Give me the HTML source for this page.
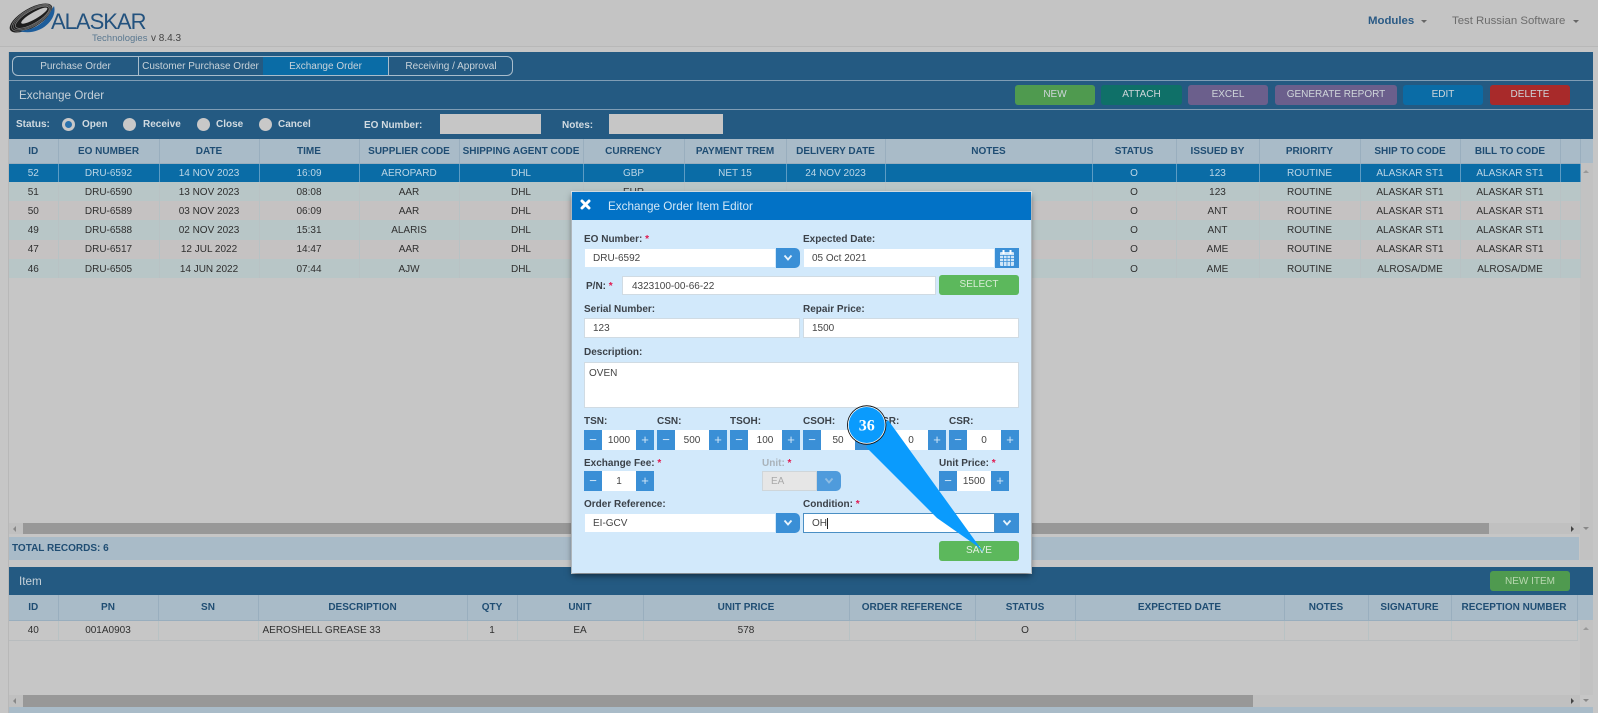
<!DOCTYPE html>
<html><head><meta charset="utf-8"><title>Exchange Order</title>
<style>
html,body{margin:0;padding:0;width:1598px;height:713px;overflow:hidden;background:#c6c6c6}
#r{position:absolute;left:0;top:0;width:1598px;height:713px;overflow:hidden;font-family:"Liberation Sans",sans-serif;font-size:10px;color:#333;filter:blur(.35px)}
.a{position:absolute;white-space:nowrap}
.bl{background:#245a82}
.btn{position:absolute;top:85px;height:20px;line-height:20px;text-align:center;border-radius:3px;color:#cfd6da;font-size:10px}
table{position:absolute;border-collapse:collapse;table-layout:fixed;font-size:10px}
td,th{padding:1px 0 0;text-align:center;overflow:hidden;white-space:nowrap}
th{background:#a9bbc8;color:#1f4d73;font-weight:bold;border-right:1px solid #99aebe;border-bottom:1px solid #99aebe}
td{color:#2f2f2f;border-right:1px solid #b8c2c4}
tr.n td{padding-top:0}
tr.s td{background:#0a6ca6;color:#bcd6e6;border-right:1px solid #5d9cc4}
tr.t td{background:#b8c6c7}
tr.g td{background:#c5c2c2}
.l{position:absolute;white-space:nowrap;font-weight:bold;color:#3b4148;font-size:10px;line-height:14px}
.l i{color:#e0194f;font-style:normal;font-weight:bold}
.in{position:absolute;background:#fff;border:1px solid #d0dbe3;box-sizing:border-box;height:20px;line-height:20px;padding-left:8px;color:#444;font-size:10px}
.sb{position:absolute;background:#3a8fd6;height:20px;width:24px;border-radius:0 5px 5px 0}
.sb svg{position:absolute;left:7px;top:6px}
.sp{position:absolute;height:20px;width:70px;background:#fff}
.sp b{position:absolute;top:0;width:18px;height:20px;background:#3a8fd6;color:#d3e7f7;font-weight:normal;font-size:13px;line-height:20px;text-align:center}
.sp b.m{left:0}.sp b.p{right:0}
.sp span{position:absolute;left:18px;right:18px;top:0;line-height:22px;text-align:center;color:#444}
.radio{position:absolute;width:13px;height:13px;border-radius:50%;background:#c8c8c8}
.rl{position:absolute;color:#d2dbe1;font-weight:bold;font-size:10px;line-height:14px}
</style></head><body><div id="r">

<!-- Top bar -->
<div class="a" style="left:0;top:0;width:1598px;height:46px;background:#c4c4c4;border-bottom:1px solid #b8b8b8"></div>
<svg class="a" style="left:8px;top:3px" width="50" height="32" viewBox="0 0 50 32">
<g transform="rotate(-30 23 15)">
<ellipse cx="23" cy="15" rx="24" ry="9.5" fill="#1e1e1e"/>
<g fill="none">
<ellipse cx="23.5" cy="15" rx="22.4" ry="8.4" stroke="#777" stroke-width=".7"/>
<ellipse cx="24" cy="15" rx="20.8" ry="7.4" stroke="#6c6c6c" stroke-width=".7"/>
<ellipse cx="24.5" cy="15" rx="19.2" ry="6.4" stroke="#888" stroke-width=".7"/>
</g>
<ellipse cx="27" cy="14.6" rx="15" ry="3.4" fill="#c4c4c4"/>
</g>
<path d="M11 28 C26 27 37 20 43 8 L46 3 C50 17 31 34 11 28Z" fill="#1d5d9b"/>
</svg>
<div class="a" style="left:51px;top:9px;font-size:22px;line-height:26px;letter-spacing:-1px;color:#23527e">ALASKAR</div>
<div class="a" style="left:92px;top:33px;font-size:9.5px;line-height:12px;color:#5a7890">Technologies</div>
<div class="a" style="left:151px;top:33px;font-size:10px;line-height:12px;color:#444">v 8.4.3</div>
<div class="a" style="left:1368px;top:14px;font-size:11.4px;line-height:14px;font-weight:bold;color:#2a5a85">Modules</div>
<div class="a" style="left:1421px;top:20px;border:3px solid transparent;border-top:3px solid #666;border-bottom:0"></div>
<div class="a" style="left:1452px;top:14px;font-size:11.4px;line-height:14px;color:#6c6c6c">Test Russian Software</div>
<div class="a" style="left:1573px;top:20px;border:3px solid transparent;border-top:3px solid #666;border-bottom:0"></div>

<!-- Left page border -->
<div class="a" style="left:8px;top:52px;width:1px;height:661px;background:#b8b8b8"></div>

<!-- Main panel -->
<div class="a bl" style="left:9px;top:52px;width:1584px;height:87px"></div>
<div class="a" style="left:9px;top:80px;width:1584px;height:1px;background:#7f9db5"></div>
<div class="a" style="left:9px;top:109px;width:1584px;height:1px;background:#7f9db5"></div>

<!-- Tabs -->
<div class="a" style="left:12px;top:56px;width:501px;height:20px;box-sizing:border-box;border:1px solid #a9bdcc;border-radius:6px;overflow:hidden">
 <div class="a" style="left:0;top:0;width:125px;height:18px;line-height:19px;text-align:center;color:#c9d3da;border-right:1px solid #a9bdcc">Purchase Order</div>
 <div class="a" style="left:125px;top:0;width:125px;height:18px;line-height:19px;text-align:center;color:#c9d3da;border-right:1px solid #a9bdcc">Customer Purchase Order</div>
 <div class="a" style="left:250px;top:0;width:125px;height:18px;line-height:19px;text-align:center;color:#c9d3da;background:#0a6ca6;border-right:1px solid #a9bdcc">Exchange Order</div>
 <div class="a" style="left:376px;top:0;width:124px;height:18px;line-height:19px;text-align:center;color:#c9d3da">Receiving / Approval</div>
</div>

<div class="a" style="left:19px;top:89px;font-size:11.7px;line-height:14px;color:#c6d1d9">Exchange Order</div>

<div class="btn" style="left:1015px;width:80px;background:#4f9a4f">NEW</div>
<div class="btn" style="left:1101px;width:81px;background:#0f7068">ATTACH</div>
<div class="btn" style="left:1188px;width:80px;background:#6b5f8c">EXCEL</div>
<div class="btn" style="left:1275px;width:122px;background:#6b5f8c">GENERATE REPORT</div>
<div class="btn" style="left:1403px;width:80px;background:#0a6ca6">EDIT</div>
<div class="btn" style="left:1490px;width:80px;background:#a82a2a">DELETE</div>

<!-- Status row -->
<div class="rl" style="left:16px;top:118px">Status:</div>
<div class="radio" style="left:62px;top:118px"></div>
<div class="a" style="left:65px;top:121px;width:7px;height:7px;border-radius:50%;background:#2a72ad"></div>
<div class="rl" style="left:82px;top:118px">Open</div>
<div class="radio" style="left:123px;top:118px"></div>
<div class="rl" style="left:143px;top:118px">Receive</div>
<div class="radio" style="left:197px;top:118px"></div>
<div class="rl" style="left:216px;top:118px">Close</div>
<div class="radio" style="left:259px;top:118px"></div>
<div class="rl" style="left:278px;top:118px">Cancel</div>
<div class="rl" style="left:364px;top:119px">EO Number:</div>
<div class="a" style="left:440px;top:114px;width:101px;height:20px;background:#c6c6c6"></div>
<div class="rl" style="left:562px;top:119px">Notes:</div>
<div class="a" style="left:609px;top:114px;width:114px;height:20px;background:#c6c6c6"></div>

<!-- Main grid body bg -->
<div class="a" style="left:9px;top:278px;width:1571px;height:245px;background:#c6c6c6"></div>
<div class="a" style="left:1580px;top:139px;width:13px;height:24px;background:#a9bbc8"></div>
<div class="a" style="left:1580px;top:163px;width:13px;height:397px;background:#c2c2c2"></div>
<div class="a" style="left:1583px;top:170px;border:3px solid transparent;border-bottom:3px solid #999;border-top:0"></div>

<table style="left:9px;top:139px;width:1571px">
<colgroup><col style="width:49px"><col style="width:101px"><col style="width:100px"><col style="width:100px"><col style="width:100px"><col style="width:124px"><col style="width:101px"><col style="width:102px"><col style="width:99px"><col style="width:207px"><col style="width:84px"><col style="width:83px"><col style="width:101px"><col style="width:100px"><col style="width:100px"><col style="width:20px"></colgroup>
<tr style="height:24px"><th>ID</th><th>EO NUMBER</th><th>DATE</th><th>TIME</th><th>SUPPLIER CODE</th><th>SHIPPING AGENT CODE</th><th>CURRENCY</th><th>PAYMENT TREM</th><th>DELIVERY DATE</th><th>NOTES</th><th>STATUS</th><th>ISSUED BY</th><th>PRIORITY</th><th>SHIP TO CODE</th><th>BILL TO CODE</th><th></th></tr>
<tr class="s" style="height:19px"><td>52</td><td>DRU-6592</td><td>14 NOV 2023</td><td>16:09</td><td>AEROPARD</td><td>DHL</td><td>GBP</td><td>NET 15</td><td>24 NOV 2023</td><td></td><td>O</td><td>123</td><td>ROUTINE</td><td>ALASKAR ST1</td><td>ALASKAR ST1</td><td></td></tr>
<tr class="t" style="height:19px"><td>51</td><td>DRU-6590</td><td>13 NOV 2023</td><td>08:08</td><td>AAR</td><td>DHL</td><td>EUR</td><td></td><td></td><td></td><td>O</td><td>123</td><td>ROUTINE</td><td>ALASKAR ST1</td><td>ALASKAR ST1</td><td></td></tr>
<tr class="g" style="height:19px"><td>50</td><td>DRU-6589</td><td>03 NOV 2023</td><td>06:09</td><td>AAR</td><td>DHL</td><td></td><td></td><td></td><td></td><td>O</td><td>ANT</td><td>ROUTINE</td><td>ALASKAR ST1</td><td>ALASKAR ST1</td><td></td></tr>
<tr class="t n" style="height:20px"><td>49</td><td>DRU-6588</td><td>02 NOV 2023</td><td>15:31</td><td>ALARIS</td><td>DHL</td><td></td><td></td><td></td><td></td><td>O</td><td>ANT</td><td>ROUTINE</td><td>ALASKAR ST1</td><td>ALASKAR ST1</td><td></td></tr>
<tr class="g n" style="height:19px"><td>47</td><td>DRU-6517</td><td>12 JUL 2022</td><td>14:47</td><td>AAR</td><td>DHL</td><td></td><td></td><td></td><td></td><td>O</td><td>AME</td><td>ROUTINE</td><td>ALASKAR ST1</td><td>ALASKAR ST1</td><td></td></tr>
<tr class="t" style="height:19px"><td>46</td><td>DRU-6505</td><td>14 JUN 2022</td><td>07:44</td><td>AJW</td><td>DHL</td><td></td><td></td><td></td><td></td><td>O</td><td>AME</td><td>ROUTINE</td><td>ALROSA/DME</td><td>ALROSA/DME</td><td></td></tr>
</table>

<!-- Scrollbar 1 -->
<div class="a" style="left:9px;top:523px;width:1571px;height:11px;background:#c0c0c0"></div>
<div class="a" style="left:23px;top:523px;width:1466px;height:11px;background:#989898"></div>
<div class="a" style="left:13px;top:526px;border:3px solid transparent;border-right:3px solid #888;border-left:0"></div>
<div class="a" style="left:1571px;top:526px;border:3px solid transparent;border-left:3px solid #444;border-right:0"></div>
<div class="a" style="left:1583px;top:527px;border:3px solid transparent;border-top:3px solid #888;border-bottom:0"></div>

<!-- Total -->
<div class="a" style="left:9px;top:537px;width:1570px;height:23px;background:#a9bbc8"></div>
<div class="a" style="left:12px;top:543px;font-weight:bold;line-height:12px;color:#1f4d73">TOTAL RECORDS: 6</div>

<!-- Item panel -->
<div class="a bl" style="left:9px;top:567px;width:1584px;height:28px"></div>
<div class="a" style="left:19px;top:575px;font-size:11.7px;line-height:14px;color:#c6d1d9">Item</div>
<div class="btn" style="left:1490px;top:571px;width:80px;background:#4f9a4f;color:#b9d8b0;line-height:21px">NEW ITEM</div>

<div class="a" style="left:1577px;top:595px;width:16px;height:25px;background:#a9bbc8"></div>
<div class="a" style="left:1580px;top:620px;width:13px;height:75px;background:#c2c2c2"></div>
<div class="a" style="left:1583px;top:627px;border:3px solid transparent;border-bottom:3px solid #999;border-top:0"></div>

<table style="left:9px;top:595px;width:1568px">
<colgroup><col style="width:49px"><col style="width:100px"><col style="width:100px"><col style="width:209px"><col style="width:50px"><col style="width:126px"><col style="width:206px"><col style="width:126px"><col style="width:100px"><col style="width:209px"><col style="width:84px"><col style="width:83px"><col style="width:126px"></colgroup>
<tr style="height:25px"><th>ID</th><th>PN</th><th>SN</th><th>DESCRIPTION</th><th>QTY</th><th>UNIT</th><th>UNIT PRICE</th><th>ORDER REFERENCE</th><th>STATUS</th><th>EXPECTED DATE</th><th>NOTES</th><th>SIGNATURE</th><th>RECEPTION NUMBER</th></tr>
<tr class="n" style="height:20px"><td style="border-bottom:1px solid #b8bcbe">40</td><td style="border-bottom:1px solid #b8bcbe">001A0903</td><td style="border-bottom:1px solid #b8bcbe"></td><td style="text-align:left;padding-left:4px;border-bottom:1px solid #b8bcbe">AEROSHELL GREASE 33</td><td style="border-bottom:1px solid #b8bcbe">1</td><td style="border-bottom:1px solid #b8bcbe">EA</td><td style="border-bottom:1px solid #b8bcbe">578</td><td style="border-bottom:1px solid #b8bcbe"></td><td style="border-bottom:1px solid #b8bcbe">O</td><td style="border-bottom:1px solid #b8bcbe"></td><td style="border-bottom:1px solid #b8bcbe"></td><td style="border-bottom:1px solid #b8bcbe"></td><td style="border-bottom:1px solid #b8bcbe"></td></tr>
</table>

<!-- Scrollbar 2 -->
<div class="a" style="left:9px;top:695px;width:1571px;height:12px;background:#c0c0c0"></div>
<div class="a" style="left:23px;top:695px;width:1230px;height:12px;background:#989898"></div>
<div class="a" style="left:13px;top:698px;border:3px solid transparent;border-right:3px solid #888;border-left:0"></div>
<div class="a" style="left:1571px;top:698px;border:3px solid transparent;border-left:3px solid #444;border-right:0"></div>
<div class="a" style="left:1583px;top:699px;border:3px solid transparent;border-top:3px solid #888;border-bottom:0"></div>
<div class="a" style="left:9px;top:707px;width:1584px;height:6px;background:#a9bbc8"></div>

<!-- Modal -->
<div class="a" style="left:572px;top:192px;width:459px;height:381px;background:#d2e9fb;box-shadow:0 3px 6px rgba(0,0,0,.5),0 0 0 1px #dfe9f0"></div>
<div class="a" style="left:572px;top:192px;width:459px;height:28px;background:#0272c6"></div>
<svg class="a" style="left:580px;top:199px" width="11" height="11" viewBox="0 0 11 11"><path d="M2 2L9 9M9 2L2 9" stroke="#fff" stroke-width="3" stroke-linecap="round"/></svg>
<div class="a" style="left:608px;top:200px;font-size:11.7px;line-height:14px;color:#d4e8f7">Exchange Order Item Editor</div>

<div class="l" style="left:584px;top:233px">EO Number: <i>*</i></div>
<div class="in" style="left:584px;top:248px;width:192px;border-color:#d2e9fb">DRU-6592</div>
<div class="sb" style="left:776px;top:248px"><svg width="10" height="8" viewBox="0 0 10 8"><path d="M1.5 1.5L5 5.5L8.5 1.5" fill="none" stroke="#e8f4fc" stroke-width="1.8"/></svg></div>

<div class="l" style="left:803px;top:233px">Expected Date:</div>
<div class="in" style="left:803px;top:248px;width:192px;border-color:#d2e9fb">05 Oct 2021</div>
<div class="a" style="left:995px;top:248px;width:24px;height:20px;background:#3a8fd6"></div>
<svg class="a" style="left:999px;top:249px" width="16" height="18" viewBox="0 0 16 18"><rect x="1" y="3" width="14" height="14" rx="1" fill="#cfe6f8"/><rect x="3.5" y="1" width="2" height="4" fill="#fff"/><rect x="10.5" y="1" width="2" height="4" fill="#fff"/><path d="M1 6.5H15M1 9.5H15M1 12.5H15M4.5 6V17M8 6V17M11.5 6V17" stroke="#3a8fd6" stroke-width=".8"/></svg>

<div class="l" style="left:586px;top:280px">P/N: <i>*</i></div>
<div class="in" style="left:622px;top:276px;width:314px;height:19px;padding-left:9px;line-height:19px">4323100-00-66-22</div>
<div class="a" style="left:939px;top:275px;width:80px;height:20px;border-radius:3px;background:#5cb85c;color:#d9ecd6;text-align:center;line-height:19px">SELECT</div>

<div class="l" style="left:584px;top:303px">Serial Number:</div>
<div class="in" style="left:584px;top:318px;width:216px">123</div>
<div class="l" style="left:803px;top:303px">Repair Price:</div>
<div class="in" style="left:803px;top:318px;width:216px">1500</div>

<div class="l" style="left:584px;top:346px">Description:</div>
<div class="in" style="left:584px;top:362px;width:435px;height:46px;padding-left:4px;line-height:22px">OVEN</div>

<div class="l" style="left:584px;top:415px">TSN:</div>
<div class="l" style="left:657px;top:415px">CSN:</div>
<div class="l" style="left:730px;top:415px">TSOH:</div>
<div class="l" style="left:803px;top:415px">CSOH:</div>
<div class="l" style="left:876px;top:415px">TSR:</div>
<div class="l" style="left:949px;top:415px">CSR:</div>

<div class="sp" style="left:584px;top:430px"><b class="m">−</b><span>1000</span><b class="p">+</b></div>
<div class="sp" style="left:657px;top:430px"><b class="m">−</b><span>500</span><b class="p">+</b></div>
<div class="sp" style="left:730px;top:430px"><b class="m">−</b><span>100</span><b class="p">+</b></div>
<div class="sp" style="left:803px;top:430px"><b class="m">−</b><span>50</span><b class="p">+</b></div>
<div class="sp" style="left:876px;top:430px"><b class="m">−</b><span>0</span><b class="p">+</b></div>
<div class="sp" style="left:949px;top:430px"><b class="m">−</b><span>0</span><b class="p">+</b></div>

<div class="l" style="left:584px;top:457px">Exchange Fee: <i>*</i></div>
<div class="sp" style="left:584px;top:471px"><b class="m">−</b><span>1</span><b class="p">+</b></div>

<div class="l" style="left:762px;top:457px;color:#a9b2b9">Unit: <i>*</i></div>
<div class="in" style="left:762px;top:471px;width:55px;background:#e6e6e6;color:#a9a9a9;border-color:#cfd6da">EA</div>
<div class="sb" style="left:817px;top:471px;background:#4f9bdc"><svg width="10" height="8" viewBox="0 0 10 8"><path d="M1.5 1.5L5 5.5L8.5 1.5" fill="none" stroke="#8fbde3" stroke-width="1.8"/></svg></div>

<div class="l" style="left:939px;top:457px">Unit Price: <i>*</i></div>
<div class="sp" style="left:939px;top:471px"><b class="m">−</b><span>1500</span><b class="p">+</b></div>

<div class="l" style="left:584px;top:498px">Order Reference:</div>
<div class="in" style="left:584px;top:513px;width:192px;border-color:#d2e9fb">EI-GCV</div>
<div class="sb" style="left:776px;top:513px"><svg width="10" height="8" viewBox="0 0 10 8"><path d="M1.5 1.5L5 5.5L8.5 1.5" fill="none" stroke="#e8f4fc" stroke-width="1.8"/></svg></div>

<div class="l" style="left:803px;top:498px">Condition: <i>*</i></div>
<div class="in" style="left:803px;top:513px;width:192px;border-color:#4a8fc4">OH<span style="border-right:1px solid #222"></span></div>
<div class="sb" style="left:995px;top:513px;border-radius:0"><svg width="10" height="8" viewBox="0 0 10 8"><path d="M1.5 1.5L5 5.5L8.5 1.5" fill="none" stroke="#e8f4fc" stroke-width="1.8"/></svg></div>

<div class="a" style="left:939px;top:541px;width:80px;height:20px;border-radius:3px;background:#5cb85c;color:#e3f1e0;text-align:center;line-height:20px">SAVE</div>

<!-- Callout -->
<svg class="a" style="left:840px;top:400px" width="160" height="160" viewBox="840 400 160 160">
<path d="M888 420L984 553L977 546L937 518L866 447Z" fill="#0a9bfd"/>
<circle cx="866.7" cy="425" r="19.7" fill="#111"/>
<circle cx="866.7" cy="425" r="18.8" fill="#fff"/>
<circle cx="866.7" cy="425" r="18" fill="#0a9bfd"/>
<text x="866.7" y="430.5" text-anchor="middle" font-family="Liberation Serif, serif" font-weight="bold" font-size="16" fill="#fff">36</text>
</svg>

</div></body></html>
